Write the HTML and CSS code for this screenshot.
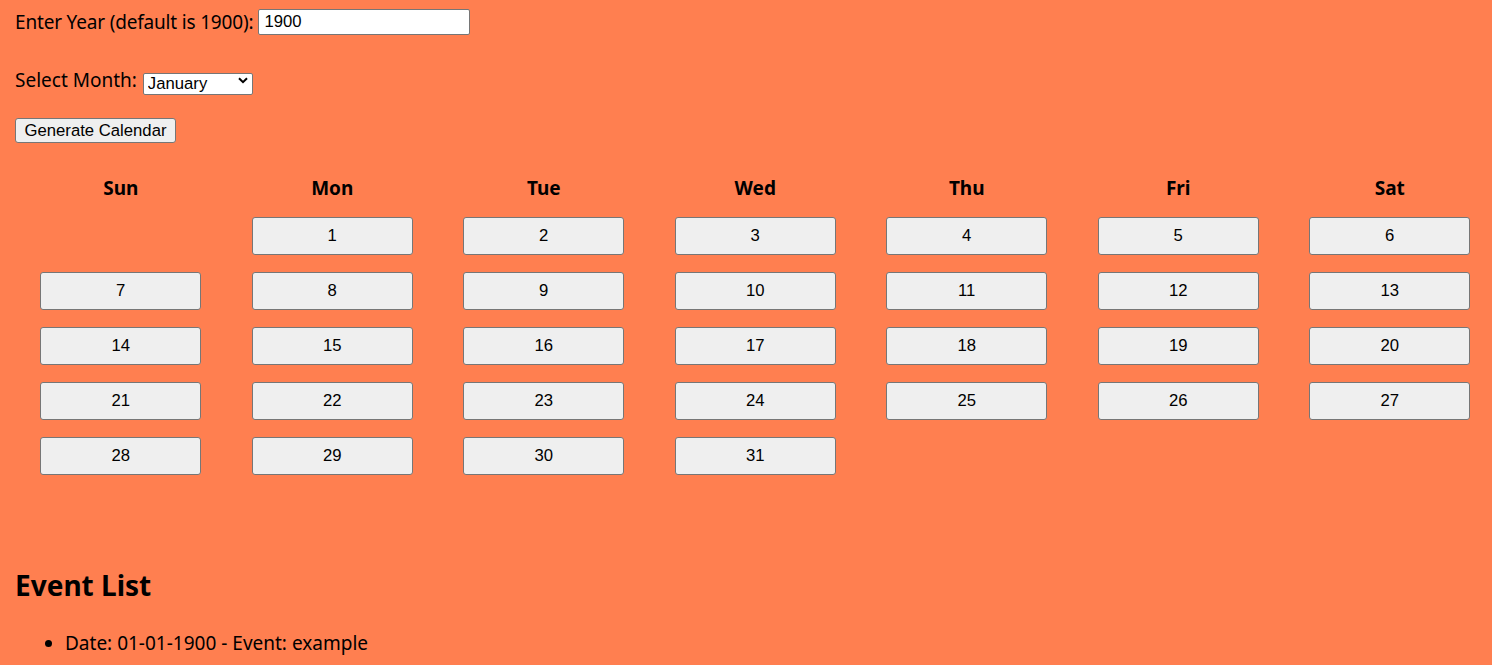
FILE: index.html
```html
<!DOCTYPE html>
<html lang="en">
<head>
<meta charset="utf-8">
<title>Calendar</title>
<link rel="stylesheet" href="styles.css">
</head>
<body>
  <div class="controls">
    <div class="row row-year">
      <label class="lbl lbl-year" for="year">Enter Year (default is 1900):</label>
      <input id="year" class="year-input" type="text" value="1900">
    </div>
    <div class="row row-month">
      <label class="lbl lbl-month" for="month">Select Month:</label>
      <span class="select-wrap">
        <select id="month" class="month-select">
          <option>January</option>
          <option>February</option>
          <option>March</option>
          <option>April</option>
          <option>May</option>
          <option>June</option>
          <option>July</option>
          <option>August</option>
          <option>September</option>
          <option>October</option>
          <option>November</option>
          <option>December</option>
        </select>
        <svg class="chev" width="10" height="7" viewBox="0 0 10 7"><path d="M1 1.2 L5 5.2 L9 1.2" fill="none" stroke="#000" stroke-width="2"/></svg>
      </span>
    </div>
    <div class="row row-btn">
      <button class="gen-btn" type="button">Generate Calendar</button>
    </div>
  </div>

  <div class="calendar">
    <div class="dow">Sun</div><div class="dow">Mon</div><div class="dow">Tue</div><div class="dow">Wed</div><div class="dow">Thu</div><div class="dow">Fri</div><div class="dow">Sat</div>

    <div class="cell"></div>
    <div class="cell"><button class="day">1</button></div>
    <div class="cell"><button class="day">2</button></div>
    <div class="cell"><button class="day">3</button></div>
    <div class="cell"><button class="day">4</button></div>
    <div class="cell"><button class="day">5</button></div>
    <div class="cell"><button class="day">6</button></div>

    <div class="cell"><button class="day">7</button></div>
    <div class="cell"><button class="day">8</button></div>
    <div class="cell"><button class="day">9</button></div>
    <div class="cell"><button class="day">10</button></div>
    <div class="cell"><button class="day">11</button></div>
    <div class="cell"><button class="day">12</button></div>
    <div class="cell"><button class="day">13</button></div>

    <div class="cell"><button class="day">14</button></div>
    <div class="cell"><button class="day">15</button></div>
    <div class="cell"><button class="day">16</button></div>
    <div class="cell"><button class="day">17</button></div>
    <div class="cell"><button class="day">18</button></div>
    <div class="cell"><button class="day">19</button></div>
    <div class="cell"><button class="day">20</button></div>

    <div class="cell"><button class="day">21</button></div>
    <div class="cell"><button class="day">22</button></div>
    <div class="cell"><button class="day">23</button></div>
    <div class="cell"><button class="day">24</button></div>
    <div class="cell"><button class="day">25</button></div>
    <div class="cell"><button class="day">26</button></div>
    <div class="cell"><button class="day">27</button></div>

    <div class="cell"><button class="day">28</button></div>
    <div class="cell"><button class="day">29</button></div>
    <div class="cell"><button class="day">30</button></div>
    <div class="cell"><button class="day">31</button></div>
    <div class="cell"></div>
    <div class="cell"></div>
    <div class="cell"></div>
  </div>

  <h2 class="events-title">Event List</h2>
  <ul class="events">
    <li>Date: 01-01-1900 - Event: example</li>
  </ul>
</body>
</html>
```

FILE: styles.css
```css
html {
  overflow: hidden;
}

body {
  margin: 0;
  padding: 9px 0 0 15px;
  background: #ff7f50;
  color: #000;
  font-family: "Noto Sans", "Open Sans", sans-serif;
  font-size: 19px;
}

.controls {
  display: flex;
  flex-direction: column;
}

.row {
  display: flex;
  align-items: center;
}

.row-year {
  height: 26px;
}

.row-month {
  margin-top: 34px;
  height: 22px;
}

.row-btn {
  margin-top: 27px;
}

.lbl {
  margin-right: 5px;
  line-height: 26px;
}

.lbl-year {
  letter-spacing: -0.18px;
}

.lbl-month {
  margin-right: 6px;
}

.year-input {
  box-sizing: border-box;
  width: 212px;
  height: 26px;
  margin: 0;
  padding: 0 5px;
  border: 1px solid #767676;
  border-radius: 2px;
  background: #fff;
  font-family: "Liberation Sans", Arial, sans-serif;
  font-size: 16.7px;
  color: #000;
}

.select-wrap {
  position: relative;
  display: inline-block;
  height: 22px;
}

.month-select {
  appearance: none;
  -webkit-appearance: none;
  box-sizing: border-box;
  width: 110px;
  height: 22px;
  margin: 0;
  padding: 0 0 0 4px;
  border: 1px solid #767676;
  border-radius: 2px;
  background: #fff;
  font-family: "Liberation Sans", Arial, sans-serif;
  font-size: 16.7px;
  line-height: 20px;
  color: #000;
}

.chev {
  position: absolute;
  right: 5px;
  top: 8px;
  pointer-events: none;
}

.gen-btn {
  box-sizing: border-box;
  width: 161px;
  height: 25px;
  margin: 0;
  padding: 0;
  border: 1px solid #767676;
  border-radius: 3px;
  background: #efefef;
  font-family: "Liberation Sans", Arial, sans-serif;
  font-size: 16.7px;
  color: #000;
}

.calendar {
  display: grid;
  grid-template-columns: repeat(7, 211.5px);
  margin-top: 25px;
}

.dow {
  height: 40px;
  display: flex;
  align-items: center;
  justify-content: center;
  font-weight: 700;
  font-size: 19px;
}

.cell {
  height: 55px;
  display: flex;
  align-items: center;
  justify-content: center;
}

.day {
  box-sizing: border-box;
  width: 161px;
  height: 38px;
  margin: 0;
  padding: 0;
  border: 1px solid #767676;
  border-radius: 3px;
  background: #efefef;
  font-family: "Liberation Sans", Arial, sans-serif;
  font-size: 16.7px;
  color: #000;
}

.events-title {
  margin: 84px 0 0 0;
  font-size: 28px;
  font-weight: 700;
  line-height: 36px;
}

.events {
  margin: 26px 0 0 0;
  padding-left: 50px;
  font-size: 19px;
}

.events li {
  line-height: 28px;
}
```
